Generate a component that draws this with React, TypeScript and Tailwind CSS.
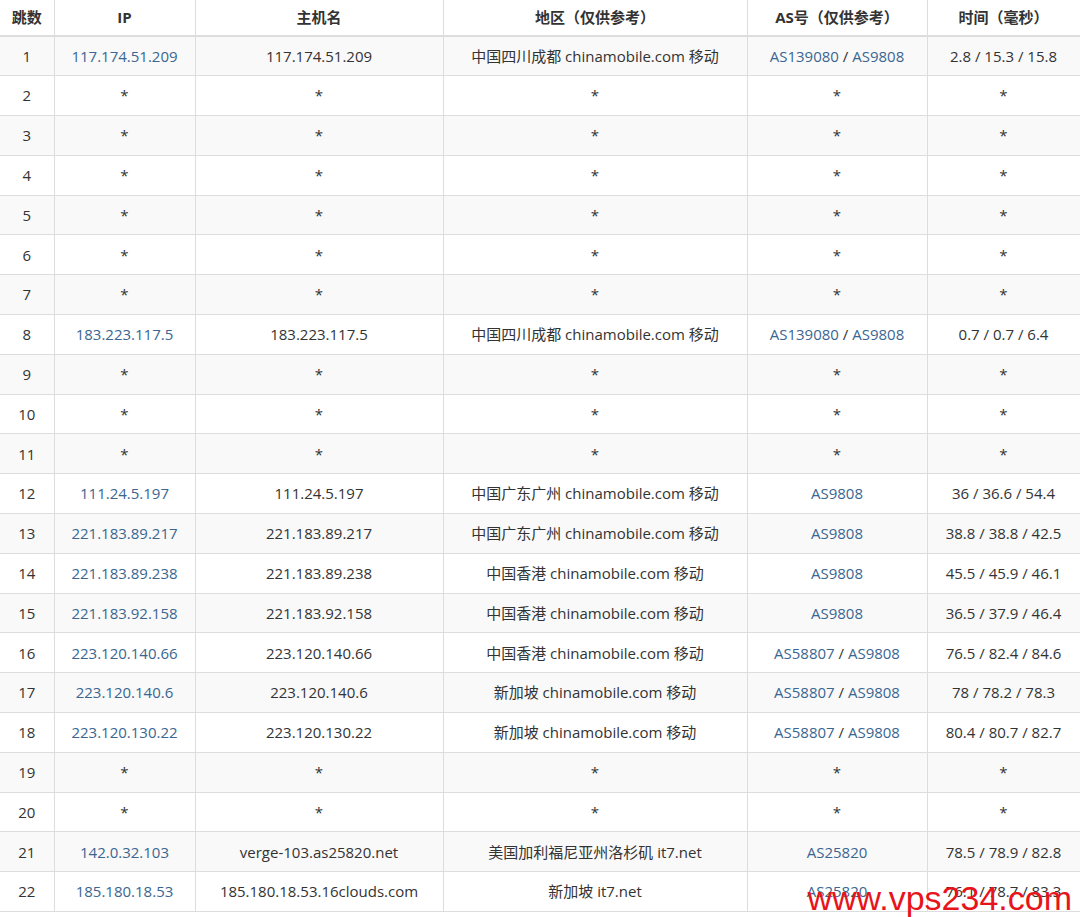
const S = "*";
type Row = [string, string, string, string, string[], string];
const rows: Row[] = [
  ["1", "117.174.51.209", "117.174.51.209", "中国四川成都 chinamobile.com 移动", ["AS139080", "AS9808"], "2.8 / 15.3 / 15.8"],
  ...["2", "3", "4", "5", "6", "7"].map((n) => [n, S, S, S, [S], S] as Row),
  ["8", "183.223.117.5", "183.223.117.5", "中国四川成都 chinamobile.com 移动", ["AS139080", "AS9808"], "0.7 / 0.7 / 6.4"],
  ...["9", "10", "11"].map((n) => [n, S, S, S, [S], S] as Row),
  ["12", "111.24.5.197", "111.24.5.197", "中国广东广州 chinamobile.com 移动", ["AS9808"], "36 / 36.6 / 54.4"],
  ["13", "221.183.89.217", "221.183.89.217", "中国广东广州 chinamobile.com 移动", ["AS9808"], "38.8 / 38.8 / 42.5"],
  ["14", "221.183.89.238", "221.183.89.238", "中国香港 chinamobile.com 移动", ["AS9808"], "45.5 / 45.9 / 46.1"],
  ["15", "221.183.92.158", "221.183.92.158", "中国香港 chinamobile.com 移动", ["AS9808"], "36.5 / 37.9 / 46.4"],
  ["16", "223.120.140.66", "223.120.140.66", "中国香港 chinamobile.com 移动", ["AS58807", "AS9808"], "76.5 / 82.4 / 84.6"],
  ["17", "223.120.140.6", "223.120.140.6", "新加坡 chinamobile.com 移动", ["AS58807", "AS9808"], "78 / 78.2 / 78.3"],
  ["18", "223.120.130.22", "223.120.130.22", "新加坡 chinamobile.com 移动", ["AS58807", "AS9808"], "80.4 / 80.7 / 82.7"],
  ["19", S, S, S, [S], S],
  ["20", S, S, S, [S], S],
  ["21", "142.0.32.103", "verge-103.as25820.net", "美国加利福尼亚州洛杉矶 it7.net", ["AS25820"], "78.5 / 78.9 / 82.8"],
  ["22", "185.180.18.53", "185.180.18.53.16clouds.com", "新加坡 it7.net", ["AS25820"], "76.1 / 78.7 / 83.3"],
];

const cell = "border-r border-b border-[#dddddd] text-center px-1";

export default function App() {
  return (
    <div className="relative w-[1080px] h-[917px] bg-white text-[15px] text-[#333]" style={{ fontFamily: '"Open Sans", "Noto Sans CJK SC", sans-serif' }}>
      <table className="w-[1080px] border-collapse table-fixed">
        <colgroup>
          <col className="w-[54px]" /><col className="w-[141px]" /><col className="w-[248px]" />
          <col className="w-[304px]" /><col className="w-[180px]" /><col className="w-[153px]" />
        </colgroup>
        <thead>
          <tr className="h-[36px] font-bold">
            {["跳数", "IP", "主机名", "地区（仅供参考）", "AS号（仅供参考）", "时间（毫秒）"].map((h) => (
              <th key={h} className={`${cell} border-b-2`}>{h}</th>
            ))}
          </tr>
        </thead>
        <tbody>
          {rows.map((r, i) => (
            <tr key={r[0]} className={`h-[39.8px] ${i % 2 === 0 ? "bg-[#f9f9f9]" : "bg-white"}`}>
              <td className={cell}>{r[0]}</td>
              <td className={`${cell} ${r[1] === S ? "" : "text-[#3a6691]"}`}>{r[1]}</td>
              <td className={cell}>{r[2]}</td>
              <td className={cell}>{r[3]}</td>
              <td className={cell}>
                {r[4].map((a, j) => (
                  <span key={a}>
                    {j > 0 && " / "}
                    <span className={a === S ? "" : "text-[#3a6691]"}>{a}</span>
                  </span>
                ))}
              </td>
              <td className={cell}>{r[5]}</td>
            </tr>
          ))}
        </tbody>
      </table>
      <div className="absolute right-[8px] bottom-[2px] text-[34px] text-[#e8141b] leading-none" style={{ fontFamily: '"Liberation Sans", sans-serif' }}>
        www.vps234.com
      </div>
    </div>
  );
}
